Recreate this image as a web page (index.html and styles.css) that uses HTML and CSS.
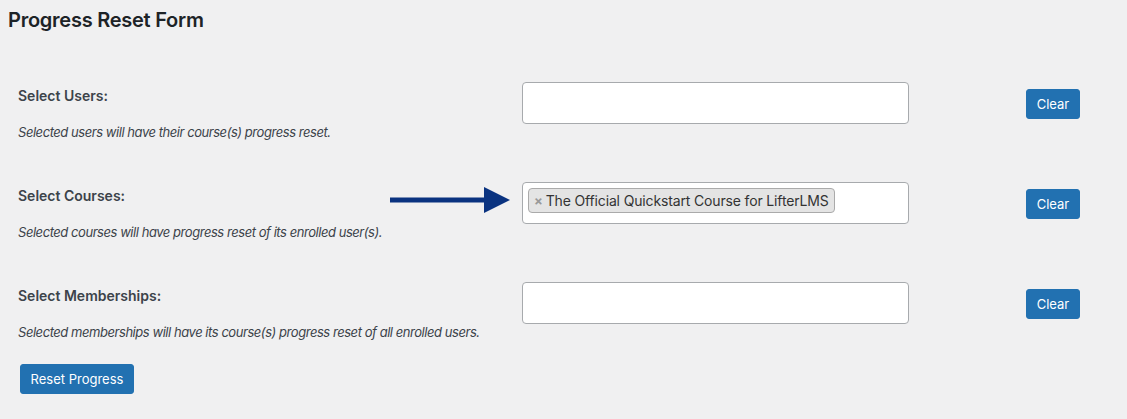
FILE: index.html
```html
<!DOCTYPE html>
<html lang="en">
<head>
<meta charset="utf-8">
<title>Progress Reset Form</title>
<link rel="stylesheet" href="styles.css">
</head>
<body>
<div class="wrap">
  <h2 class="title">Progress Reset Form</h2>
  <div class="form">
    <div class="row">
      <div class="label-cell">
        <div class="label">Select Users:</div>
        <p class="desc">Selected users will have their course(s) progress reset.</p>
      </div>
      <div class="field"></div>
      <button class="btn clear">Clear</button>
    </div>
    <div class="row">
      <div class="label-cell">
        <div class="label">Select Courses:</div>
        <p class="desc">Selected courses will have progress reset of its enrolled user(s).</p>
        <svg class="arrow" width="120" height="26" viewBox="0 0 120 26">
          <rect x="0" y="10.5" width="96" height="5" fill="#0a3380"/>
          <polygon points="94,0 120,13 94,26" fill="#0a3380"/>
        </svg>
      </div>
      <div class="field">
        <span class="chip"><span class="chip-x">×</span>The Official Quickstart Course for LifterLMS</span>
      </div>
      <button class="btn clear">Clear</button>
    </div>
    <div class="row">
      <div class="label-cell">
        <div class="label">Select Memberships:</div>
        <p class="desc">Selected memberships will have its course(s) progress reset of all enrolled users.</p>
      </div>
      <div class="field"></div>
      <button class="btn clear">Clear</button>
    </div>
  </div>
  <button class="btn submit">Reset Progress</button>
</div>
</body>
</html>
```
FILE: styles.css
```css
html, body {
  margin: 0;
  padding: 0;
  background: #f0f0f1;
}
body {
  font-family: Inter, "Noto Sans", sans-serif;
  color: #3c434a;
  width: 1127px;
  height: 419px;
  overflow: hidden;
}
.wrap {
  padding: 6px 0 0 8px;
}
.title {
  margin: 0;
  font-size: 20px;
  line-height: 28px;
  font-weight: 600;
  letter-spacing: -0.25px;
  color: #1d2327;
}
.form {
  padding-top: 48px;
  padding-left: 10px;
  display: grid;
  row-gap: 41px;
}
.row {
  display: grid;
  grid-template-columns: 504px 387px auto;
  align-items: start;
}
.label-cell {
  position: relative;
  padding-top: 4px;
}
.label {
  font-size: 14px;
  line-height: 20px;
  font-weight: 600;
  color: #3c434a;
}
.desc {
  margin: 17px 0 0;
  font-size: 13px;
  line-height: 18px;
  font-style: italic;
  letter-spacing: -0.45px;
  color: #3c434a;
  white-space: nowrap;
}
.arrow {
  position: absolute;
  left: 372px;
  top: 5px;
}
.field {
  box-sizing: border-box;
  height: 42px;
  background: #fff;
  border: 1px solid #a7aaad;
  border-radius: 4px;
  padding: 5px 5px;
}
.chip {
  display: inline-flex;
  align-items: center;
  box-sizing: border-box;
  height: 25px;
  padding: 0 5px 0 5px;
  background: #e4e4e4;
  border: 1px solid #aaa;
  border-radius: 4px;
  font-size: 14px;
  letter-spacing: -0.15px;
  color: #333;
  white-space: nowrap;
}
.chip-x {
  color: #999;
  font-weight: 700;
  font-size: 13px;
  margin-right: 3px;
}
.btn {
  font-family: inherit;
  background: #2271b1;
  color: #fff;
  border: 1px solid #2271b1;
  border-radius: 3px;
  font-size: 13px;
  line-height: 28px;
  height: 30px;
  padding: 0;
  white-space: nowrap;
  cursor: pointer;
}
.clear {
  margin: 7px 0 0 117px;
  width: 54px;
}
.submit {
  margin: 23px 0 0 12px;
  width: 114px;
}
```
